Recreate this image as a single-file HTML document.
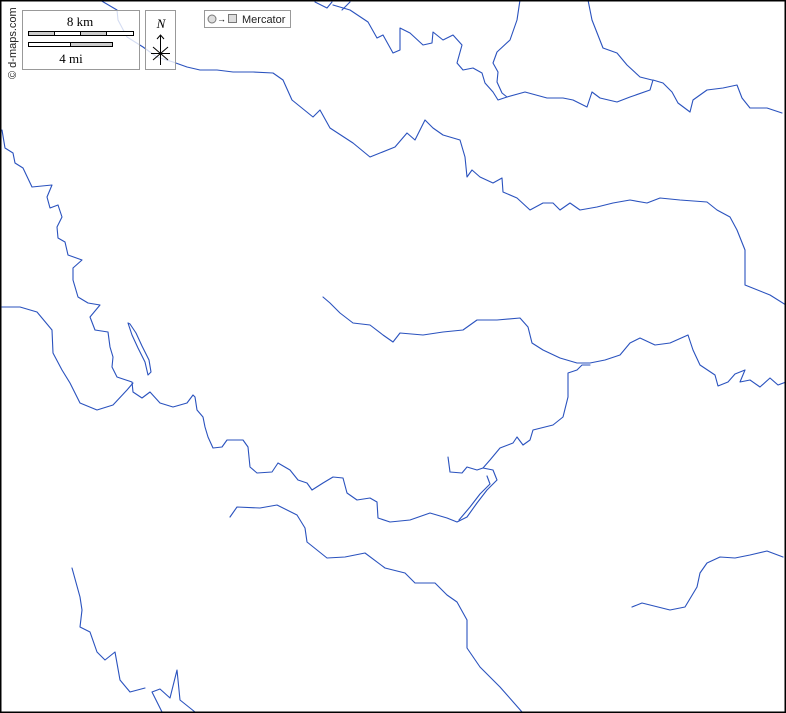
<!DOCTYPE html>
<html><head><meta charset="utf-8"><style>
html,body{margin:0;padding:0;background:#fff}
#m{position:relative;width:786px;height:713px;overflow:hidden}
</style></head><body><div id="m">
<svg width="786" height="713" viewBox="0 0 786 713" xmlns="http://www.w3.org/2000/svg" style="position:absolute;left:0;top:0">
<rect x="0" y="0" width="786" height="713" fill="#fff"/>
<g fill="none" stroke="#2a52be" stroke-width="1.1" stroke-linejoin="round" stroke-linecap="round">
<path d="M100,0 L117,10 L118,20 L127,37 L143,47 L157,57 L173,62 L187,67 L200,70 L217,70 L233,72 L253,72 L273,73 L283,80 L292,100 L313,117 L320,110 L330,128 L353,143 L370,157 L395,147 L407,133 L415,140 L425,120 L433,128 L443,135 L460,140 L465,157 L467,177 L472,170 L480,177 L493,183 L502,178 L503,192 L517,198 L530,210 L543,203 L553,203 L560,210 L570,203 L580,210 L597,207 L613,203 L630,200 L647,203 L660,198 L680,200 L707,202 L717,210 L730,217 L737,230 L745,250 L745,285 L770,295 L786,305"/>
<path d="M315,2 L327,8 L332,2 M342,10 L350,2 M333,5 L350,10 L368,22 L377,38 L383,35 L393,53 L400,50 L400,28 L410,33 L423,45 L432,43 L433,32 L443,40 L453,35 L462,45 L457,63 L463,70 L473,68 L482,73 L485,83 L493,92 L498,100 L507,97 L525,92 L547,98 L563,98 L573,100 L587,107 L592,92 L600,98 L617,102 L630,97 L650,90 L653,80 L663,83 L672,92 L678,103 L690,112 L693,100 L707,90 L723,88 L737,85 L742,98 L750,108 L767,108 L782,113"/>
<path d="M520,0 L517,20 L510,40 L497,52 L493,63 L498,72 L497,82 L502,93 L507,97"/>
<path d="M588,0 L592,20 L603,48 L617,53 L627,65 L640,77 L652,80"/>
<path d="M2,130 L5,148 L13,153 L15,163 L23,168 L32,187 L52,185 L47,197 L50,208 L58,205 L62,217 L57,227 L58,238 L65,242 L68,255 L82,260 L73,268 L73,280 L78,297 L88,303 L100,305 L90,317 L95,330 L108,332 L110,347 L113,357 L112,367 L117,377 L132,382 L133,392 L142,398 L150,392 L160,403 L173,407 L187,403 L193,395 L195,397 L197,410 L203,417 L205,427 L208,437 L213,448 L222,447 L227,440 L243,440 L248,447 L250,467 L257,473 L272,472 L278,463 L290,470 L298,480 L307,483 L312,490 L323,483 L333,477 L343,478 L347,493 L357,500 L370,498 L377,502 L378,518 L390,522 L410,520 L430,513 L447,518 L457,522 L467,517 L477,503 L487,490 L497,480 L493,470 L483,468 L490,460 L500,448 L513,443 L517,437 L523,445 L530,440 L533,430 L553,425 L563,417 L568,397 L568,373 L577,370 L582,365 L590,365"/>
<path d="M459,520 L470,507 L480,494 L490,484 L487,476"/>
<path d="M2,307 L20,307 L37,312 L52,330 L53,353 L62,370 L70,383 L80,403 L97,410 L113,405 L127,390 L133,383"/>
<path d="M128,323 L132,335 L138,348 L145,362 L148,375 L151,372 L149,360 L142,346 L136,333 L130,324 Z"/>
<path d="M448,457 L450,472 L462,473 L467,467 L477,470 L483,468"/>
<path d="M323,297 L330,303 L340,313 L353,323 L370,325 L383,335 L393,342 L400,333 L423,335 L443,332 L463,330 L477,320 L497,320 L520,318 L528,327 L532,343 L543,350 L560,358 L577,363 L590,363 L605,360 L620,355 L630,343 L640,338 L655,345 L670,343 L688,335 L693,350 L700,365 L715,375 L718,386 L728,382 L735,374 L745,370 L740,382 L750,380 L760,387 L770,378 L778,385 L786,382"/>
<path d="M230,517 L237,507 L260,508 L277,505 L297,515 L305,528 L307,542 L327,558 L345,557 L365,553 L385,568 L405,573 L415,583 L435,583 L447,595 L457,602 L467,620 L467,648 L480,667 L500,687 L522,712"/>
<path d="M632,607 L642,603 L670,610 L685,607 L697,587 L700,573 L707,563 L720,557 L735,558 L750,555 L767,551 L783,557"/>
<path d="M72,568 L80,597 L82,610 L80,627 L90,632 L97,652 L105,660 L115,652 L120,680 L130,692 L145,688"/>
<path d="M162,712 L152,692 L160,689 L170,698 L177,670 L180,700 L195,712"/>
</g>
<rect x="22.5" y="10.5" width="117" height="59" fill="#fff" fill-opacity="0.8" stroke="#999"/>
<rect x="145.5" y="10.5" width="30" height="59" fill="#fff" fill-opacity="0.8" stroke="#999"/>
<g stroke="#000" stroke-width="1">
<rect x="28.5" y="31.5" width="26" height="4" fill="#ccc"/>
<rect x="54.5" y="31.5" width="26" height="4" fill="#fff"/>
<rect x="80.5" y="31.5" width="26" height="4" fill="#ccc"/>
<rect x="106.5" y="31.5" width="27" height="4" fill="#fff"/>
<rect x="28.5" y="42.5" width="42" height="4" fill="#fff"/>
<rect x="70.5" y="42.5" width="42" height="4" fill="#ccc"/>
<line x1="160.5" y1="36" x2="160.5" y2="65"/>
<line x1="151" y1="53.5" x2="170" y2="53.5"/>
<line x1="153" y1="47" x2="168" y2="60"/>
<line x1="168" y1="47" x2="153" y2="60"/>
<path d="M157,39 L160.5,35 L164,39" fill="none"/>
</g>
<text x="80" y="26" font-family="Liberation Serif, serif" font-size="13" text-anchor="middle">8 km</text>
<text x="71" y="63" font-family="Liberation Serif, serif" font-size="13" text-anchor="middle">4 mi</text>
<text x="161" y="28" font-family="Liberation Serif, serif" font-size="13" font-style="italic" text-anchor="middle">N</text>
<rect x="204.5" y="10.5" width="86" height="17" fill="#fff" stroke="#999"/>
<circle cx="212" cy="19" r="4" fill="#ddd" stroke="#777"/>
<text x="217" y="22" font-family="Liberation Sans, sans-serif" font-size="9">→</text>
<rect x="228.5" y="14.5" width="8" height="8" fill="#ddd" stroke="#777"/>
<text x="242" y="23" font-family="Liberation Sans, sans-serif" font-size="11" fill="#222">Mercator</text>
<text transform="translate(16,79) rotate(-90)" font-family="Liberation Sans, sans-serif" font-size="11" fill="#222">© d-maps.com</text>
<rect x="0.75" y="0.75" width="784.5" height="711.5" fill="none" stroke="#000" stroke-width="1.5"/>
</svg>
</div></body></html>
